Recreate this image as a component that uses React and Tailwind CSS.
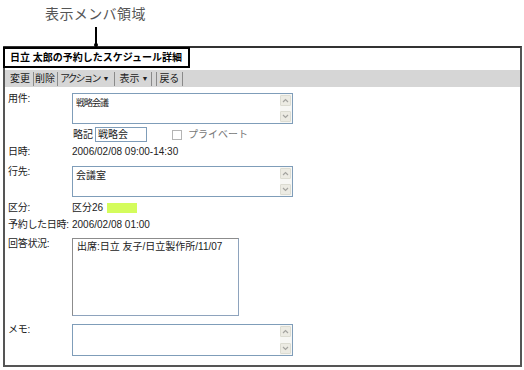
const font = { fontFamily: "'Liberation Sans', 'Noto Sans CJK JP', sans-serif" };

function ScrollBtn({ up }) {
  return (
    <div className="flex h-[11px] w-[11px] items-center justify-center rounded-[1px] border border-[#dcdcd2] bg-[#ecebe3]">
      <svg width="7" height="5" viewBox="0 0 7 5">
        <path
          d={up ? "M1 4 L3.5 1.5 L6 4" : "M1 1 L3.5 3.5 L6 1"}
          fill="none"
          stroke="#a4a4a0"
          strokeWidth="1.2"
        />
      </svg>
    </div>
  );
}

function TextBox({ w, h, text, scroll }) {
  return (
    <div
      className={`flex border border-[#7f9db9] bg-white ${w} ${h}`}
    >
      <div className="flex-1 px-[3px] pt-[3px] text-[10px] leading-[12px] text-[#222]">
        {text}
      </div>
      {scroll && (
        <div className="flex w-[12px] flex-col justify-between bg-[#f7f7f4] py-px">
          <ScrollBtn up />
          <ScrollBtn />
        </div>
      )}
    </div>
  );
}

function Row({ label, mt, children }) {
  return (
    <div className={`flex ${mt}`}>
      <div className="w-[67px] whitespace-nowrap pl-[3px] text-[10px] leading-[12px] tracking-[-0.3px] text-[#222]">
        {label}
      </div>
      <div className="flex-1">{children}</div>
    </div>
  );
}

function Sep({ ml }) {
  return <div className={`h-[14px] w-px bg-[#8a8a8a] ${ml}`} />;
}

export default function App() {
  return (
    <div className="relative h-[370px] w-[524px] overflow-hidden bg-white" style={font}>
      {/* annotation */}
      <div className="h-[46px] pl-[45px] pt-[6px] text-[14px] leading-[16px] tracking-[0.4px] text-[#555]">
        表示メンバ領域
      </div>
      <div className="absolute left-[95px] top-[27px] h-[18px] w-[2px] bg-black" />
      <div className="absolute left-[94px] top-[43px] h-[4px] w-[4px] rounded-full bg-black" />

      {/* panel */}
      <div className="ml-[3px] mr-[2px] h-[321px] border-2 border-[#555] border-t-[#333]">
        <div className="-ml-[2px] -mt-px flex h-[21px] w-[187px] items-center border-2 border-black pl-[5px] text-[10px] font-bold leading-[12px] text-black">
          日立 太郎の予約したスケジュール詳細
        </div>

        <div className="mt-[2px] flex h-[17px] items-center bg-[#d6d6d6] pl-[5px] text-[10px] leading-[12px] text-[#222]">
          <span>変更</span>
          <Sep ml="ml-[3px]" />
          <span className="ml-px">削除</span>
          <Sep ml="ml-[2px]" />
          <span className="ml-[2px] tracking-[-2px]">アクション</span>
          <span className="ml-[3px] text-[7px]">▼</span>
          <Sep ml="ml-[5px]" />
          <span className="ml-[4px]">表示</span>
          <span className="ml-[2px] text-[7px]">▼</span>
          <Sep ml="ml-[3px]" />
          <Sep ml="ml-[4px]" />
          <span className="ml-[2px]">戻る</span>
          <Sep ml="ml-[3px]" />
        </div>

        <Row label="用件:" mt="mt-[6px]">
          <TextBox
            w="w-[221px]"
            h="h-[31px]"
            scroll
            text={<span className="text-[9px] tracking-[-1px]">戦略会議</span>}
          />
        </Row>

        <div className="mt-[3px] flex h-[15px] items-center pl-[68px] text-[10px] leading-[12px] text-[#222]">
          <span>略記</span>
          <div className="ml-[2px] flex h-[15px] w-[52px] items-center border border-[#7f9db9] pl-[2px]">
            戦略会
          </div>
          <div className="ml-[25px] h-[10px] w-[10px] border border-[#b4b4b4] bg-white" />
          <span className="ml-[6px] text-[#777]">プライベート</span>
        </div>

        <Row label="日時:" mt="mt-[4px]">
          <div className="text-[10px] leading-[12px] text-[#222]">2006/02/08 09:00-14:30</div>
        </Row>

        <Row label="行先:" mt="mt-[8px]">
          <TextBox w="w-[221px]" h="h-[31px]" scroll text="会議室" />
        </Row>

        <Row label="区分:" mt="mt-[5px]">
          <div className="flex items-center text-[10px] leading-[12px] text-[#222]">
            <span>区分26</span>
            <div className="ml-[4px] h-[10px] w-[30px] bg-[#d4fc5c]" />
          </div>
        </Row>

        <Row label="予約した日時:" mt="mt-[5px]">
          <div className="text-[10px] leading-[12px] text-[#222]">2006/02/08 01:00</div>
        </Row>

        <Row label="回答状況:" mt="mt-[7px]">
          <div className="h-[78px] w-[167px] border border-[#8ea3bd] border-l-[#8c8c8c] border-t-[#8c8c8c] bg-white px-[4px] pt-[2px] text-[10px] leading-[12px] text-[#222]">
            出席:日立 友子/日立製作所/11/07
          </div>
        </Row>

        <Row label="メモ:" mt="mt-[8px]">
          <TextBox w="w-[221px]" h="h-[32px]" scroll text="" />
        </Row>
      </div>
    </div>
  );
}
